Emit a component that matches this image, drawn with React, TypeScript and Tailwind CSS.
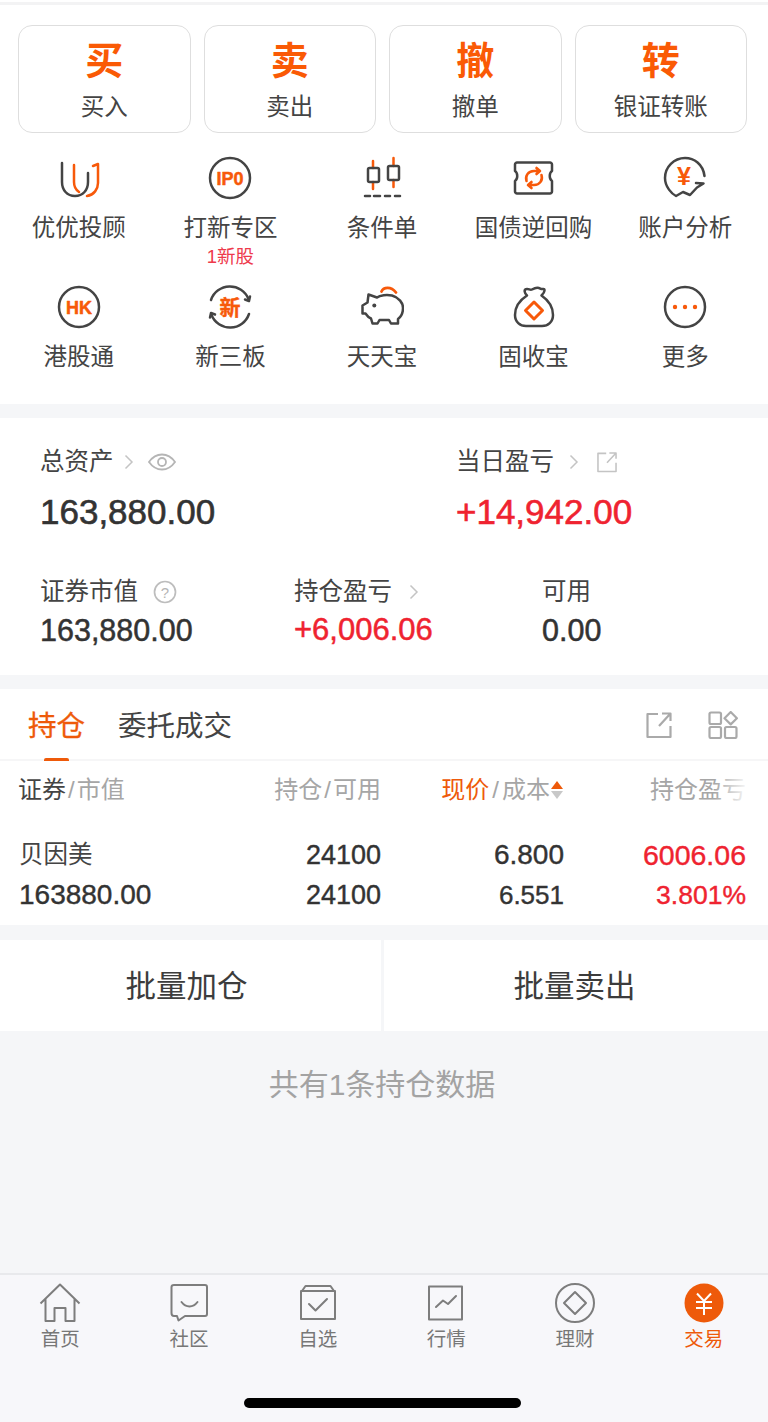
const ORANGE = "#f7590a";
const DARK = "#444444";

function Svg({ children, size = 44, box = 44, className = "" }: { children: React.ReactNode; size?: number; box?: number; className?: string }) {
  return (
    <svg width={size} height={size} viewBox={`0 0 ${box} ${box}`} fill="none" strokeLinecap="round" strokeLinejoin="round" className={className}>
      {children}
    </svg>
  );
}

const labelText = (t: string, size: number, y = 28) => (
  <text x="22" y={y} textAnchor="middle" fill={ORANGE} stroke={ORANGE} strokeWidth="0.5" fontWeight="700" fontSize={size} fontFamily="'Liberation Sans','Noto Sans CJK SC',sans-serif">{t}</text>
);

const icons: Record<string, React.ReactNode> = {
  uu: (
    <Svg>
      <g strokeWidth="2.5">
        <path d="M5 7V26C5 34 10 40 18 40C26 40 31 34 31 26V17" stroke={DARK} />
        <path d="M17 9V26C17 30 19 34 22 36" stroke={ORANGE} />
        <path d="M36 10L41 8V27C41 33 37 39 30 40" stroke={ORANGE} />
      </g>
    </Svg>
  ),
  ipo: (
    <Svg>
      <circle cx="22" cy="22" r="20" stroke={DARK} strokeWidth="2.500" />
      {labelText("IP0", 18, 28.500)}
    </Svg>
  ),
  candle: (
    <Svg>
      <g strokeWidth="2.5">
        <path d="M13 5V12M13 26V33M33.5 2V10M33.5 24V31" stroke={ORANGE} />
        <rect x="8" y="12" width="11" height="14" rx="1.5" stroke={DARK} />
        <rect x="28" y="10" width="11" height="14" rx="1.5" stroke={DARK} />
        <path d="M5 40H10M14 40H20M25 40H30M35 40H40" stroke={DARK} />
      </g>
    </Svg>
  ),
  ticket: (
    <Svg>
      <path d="M5 6.500H38C39 6.500 40 7.500 40 8.500V15C37 17 37 23 40 25V35.500C40 36.500 39 37.500 38 37.500H5C4 37.500 3 36.500 3 35.500V25C6 23 6 17 3 15V8.500C3 7.500 4 6.500 5 6.500Z" stroke={DARK} strokeWidth="2.500" />
      <path d="M14.500 25C13 20 16 15 22 15H27M24.500 12L28 15L24.500 18M29.500 19C31 24 28 29 22 29H17M19.500 32L16 29L19.500 26" stroke={ORANGE} strokeWidth="2.600" />
    </Svg>
  ),
  analysis: (
    <Svg>
      <path d="M41.500 20C40 8 31 2 22 2C11 2 2 11 2 22C2 31 9 38 13 40L20 36L27 39L34 31.500L40.500 27.500L33 27" stroke={DARK} strokeWidth="2.500" />
      <text x="21" y="29" textAnchor="middle" fill={ORANGE} fontWeight="700" fontSize="25" fontFamily="'Liberation Sans',sans-serif">¥</text>
    </Svg>
  ),
  hk: (
    <Svg>
      <circle cx="22" cy="22" r="20" stroke={DARK} strokeWidth="2.500" />
      {labelText("HK", 18, 28.500)}
    </Svg>
  ),
  xin: (
    <Svg>
      <path d="M3 15A20 20 0 0 1 40.500 14M41 29A20 20 0 0 1 3.500 30" stroke={DARK} strokeWidth="2.500" />
      <path d="M37 14.500L41 16L42 11.500M7 29.500L3 28L2 32.500" stroke={DARK} strokeWidth="2.500" />
      <text x="22" y="30" textAnchor="middle" fill={ORANGE} stroke={ORANGE} strokeWidth="0.4" fontWeight="700" fontSize="21" fontFamily="'Noto Sans CJK SC',sans-serif">新</text>
    </Svg>
  ),
  pig: (
    <Svg>
      <path d="M8.500 9.500L17 12.500C20 10 27 9.500 32 10.500C39 12.500 43 18 43 23C43 29 40 32.500 38 34V38.500H31L29 35H19.500L17.500 38.500H12.500L11 33.500C8 32.500 6.500 30 5.500 28.500H2.500V20.500L7.500 17.500Z" stroke={DARK} strokeWidth="2.500" />
      <circle cx="14.300" cy="20.500" r="2" fill={DARK} />
      <path d="M21.500 6.500C23.500 2 31 1 36 7.500" stroke={ORANGE} strokeWidth="2.800" />
    </Svg>
  ),
  bag: (
    <Svg>
      <path d="M15 10.500C12.500 8.500 11.500 4.500 14.500 4C17 3.500 18 5.500 20 4.500C22.500 3 24.500 2 27 3C28.500 3.500 29.500 4.500 31 4C33 3.500 33.500 6.500 29.500 10.500C36 15 41 22 41 30C41 37 36 41 30 41H14C8 41 3 37 3 30C3 22 8 15 15 10.500Z" stroke={DARK} strokeWidth="2.500" />
      <path d="M22 17L30.500 25.500L22 34L13.500 25.500Z" stroke={ORANGE} strokeWidth="3" />
    </Svg>
  ),
  more: (
    <Svg>
      <circle cx="22" cy="22" r="20" stroke={DARK} strokeWidth="2.500" />
      <circle cx="12" cy="22" r="2.200" fill={ORANGE} />
      <circle cx="22" cy="22" r="2.200" fill={ORANGE} />
      <circle cx="32" cy="22" r="2.200" fill={ORANGE} />
    </Svg>
  ),
};

const Chevron = ({ className = "" }: { className?: string }) => (
  <svg width="10" height="16" viewBox="0 0 10 16" fill="none" className={className}>
    <path d="M1.500 1.500L8 8L1.500 14.500" stroke="#c4c4c4" strokeWidth="1.500" />
  </svg>
);

const ShareIcon = ({ size, color, w = 2 }: { size: number; color: string; w?: number }) => (
  <svg width={size} height={size} viewBox="0 0 28 28" fill="none">
    <path d="M13 3H2.500V26H25.500V15M14 15L25.500 2.500M17 2.500H25.500V10" stroke={color} strokeWidth={w} strokeLinejoin="round" />
  </svg>
);

const actions = [["买", "买入"], ["卖", "卖出"], ["撤", "撤单"], ["转", "银证转账"]];
const row1 = [["uu", "优优投顾", ""], ["ipo", "打新专区", "1新股"], ["candle", "条件单", ""], ["ticket", "国债逆回购", ""], ["analysis", "账户分析", ""]];
const row2 = [["hk", "港股通"], ["xin", "新三板"], ["pig", "天天宝"], ["bag", "固收宝"], ["more", "更多"]];

const GRAY = "#7d7d7d";
const tabs: [string, React.ReactNode][] = [
  ["首页", <svg key="h" width="42" height="40" viewBox="0 0 42 40" fill="none" strokeLinejoin="round" stroke={GRAY} strokeWidth="2"><path d="M1.500 20.500L21 1.500L40.500 20.500M6.500 16V38H15.500V25H26.500V38H35.500V16" /></svg>],
  ["社区", <svg key="s" width="40" height="40" viewBox="0 0 40 40" fill="none" strokeLinejoin="round" strokeLinecap="round" stroke={GRAY} strokeWidth="2"><path d="M5 2H36C37 2 38 3 38 4V31C38 32 37 33 36 33H16L9.500 37.500L8 33H5C3.500 33 2.500 31.500 2.500 30V4C2.500 3 3.500 2 5 2Z" /><path d="M12.500 19C17 25 24 25 28.500 19" /></svg>],
  ["自选", <svg key="z" width="40" height="40" viewBox="0 0 40 40" fill="none" strokeLinejoin="round" strokeLinecap="round" stroke={GRAY} strokeWidth="2"><path d="M4 8L7.500 3H32.500L36 8M3 8H37V36H3V8Z" /><path d="M11 21L17.500 27.500L29 16" /></svg>],
  ["行情", <svg key="x" width="40" height="40" viewBox="0 0 40 40" fill="none" strokeLinejoin="round" strokeLinecap="round" stroke={GRAY} strokeWidth="2"><rect x="3" y="3.500" width="33" height="33" /><path d="M10 24L17 17.500L22 21L30 13" /></svg>],
  ["理财", <svg key="l" width="40" height="40" viewBox="0 0 40 40" fill="none" strokeLinejoin="round" stroke={GRAY} strokeWidth="2"><circle cx="20" cy="20" r="19" /><path d="M20 9L31 20L20 31L9 20Z" /></svg>],
  ["交易", <svg key="j" width="40" height="40" viewBox="0 0 40 40" fill="none"><circle cx="20" cy="20" r="19.500" fill="#ee5a0a" /><path d="M13 10.500L20 18L27 10.500M12 19H28M12 25H28M20 18V32" stroke="#fff" strokeWidth="2" /></svg>],
];

export default function App() {
  return (
    <div className="w-[768px] h-[1422px] bg-[#f5f6f8] overflow-hidden flex flex-col text-[#444444] [font-family:'Liberation_Sans','Noto_Sans_CJK_SC',sans-serif]">
      <section className="bg-white h-[404px] flex flex-col">
        <div className="h-[3px] mt-[2px] bg-[#f3f3f4]" />
        <div className="flex gap-[13px] pl-[18px] pr-[21px] pt-[20px]">
          {actions.map(([a, b]) => (
            <div key={a} className="w-[172.500px] h-[108px] rounded-[14px] border-[1.500px] border-[#dedede] flex flex-col items-center">
              <div className="text-[38px] leading-[40px] mt-[15px] font-bold text-[#fa5a05]">{a}</div>
              <div className="text-[23.500px] leading-[30px] mt-[11px]">{b}</div>
            </div>
          ))}
        </div>
        <div className="grid grid-cols-5 pl-[3px] pr-[7px] mt-[23px]">
          {row1.map(([i, t, s]) => (
            <div key={t} className="h-[129px] flex flex-col items-center">
              {icons[i]}
              <div className="text-[23.500px] leading-[30px] mt-[13px] whitespace-nowrap">{t}</div>
              {s && <div className="text-[18.500px] leading-[24px] mt-[2px] text-[#ee3a4c]">{s}</div>}
            </div>
          ))}
          {row2.map(([i, t]) => (
            <div key={t} className="flex flex-col items-center">
              {icons[i]}
              <div className="text-[23.500px] leading-[30px] mt-[13px] whitespace-nowrap">{t}</div>
            </div>
          ))}
        </div>
      </section>

      <section className="bg-white h-[257px] mt-[14px] px-[40px] pt-[29px]">
        <div className="flex">
          <div className="w-[416px]">
            <div className="flex items-center h-[30px] text-[24.500px] leading-[30px]">
              总资产
              <Chevron className="ml-[10px]" />
              <svg width="28" height="20" viewBox="0 0 28 20" fill="none" stroke="#b5b5b5" strokeWidth="1.800" className="ml-[14px]"><path d="M1 10C8 0 20 0 27 10C20 20 8 20 1 10Z" /><circle cx="14" cy="10" r="4" /></svg>
            </div>
            <div className="text-[35px] leading-[40px] mt-[15px] [-webkit-text-stroke:0.6px_#333] text-[#333]">163,880.00</div>
          </div>
          <div>
            <div className="flex items-center h-[30px] text-[24.500px] leading-[30px]">
              当日盈亏
              <Chevron className="ml-[15px]" />
              <span className="ml-[17px] flex"><ShareIcon size={22} color="#c4c4c4" /></span>
            </div>
            <div className="text-[35px] leading-[40px] mt-[15px] [-webkit-text-stroke:0.6px_#ef2330] text-[#ef2330]">+14,942.00</div>
          </div>
        </div>
        <div className="flex mt-[45px]">
          <div className="w-[254px]">
            <div className="flex items-center h-[30px] text-[24.500px] leading-[30px]">
              证券市值
              <svg width="24" height="24" viewBox="0 0 24 24" fill="none" className="ml-[15px]"><circle cx="12" cy="12" r="10.500" stroke="#bdbdbd" strokeWidth="1.700" /><text x="12" y="17.500" textAnchor="middle" fontSize="15" fill="#b5b5b5" fontFamily="'Liberation Sans',sans-serif">?</text></svg>
            </div>
            <div className="text-[30.500px] leading-[36px] mt-[5px] [-webkit-text-stroke:0.5px_#333] text-[#333]">163,880.00</div>
          </div>
          <div className="w-[248px]">
            <div className="flex items-center h-[30px] text-[24.500px] leading-[30px]">
              持仓盈亏
              <Chevron className="ml-[17px]" />
            </div>
            <div className="text-[31px] leading-[36px] mt-[5px] [-webkit-text-stroke:0.5px_#ef2330] text-[#ef2330]">+6,006.06</div>
          </div>
          <div>
            <div className="h-[30px] text-[24.500px] leading-[30px]">可用</div>
            <div className="text-[30.500px] leading-[36px] mt-[5px] [-webkit-text-stroke:0.5px_#333] text-[#333]">0.00</div>
          </div>
        </div>
      </section>

      <section className="bg-white h-[236px] mt-[14px]">
        <div className="h-[72px] border-b-2 border-[#f6f6f7] flex pl-[28px] pr-[30px] pt-[19px]">
          <div className="flex flex-col items-center h-[53px]">
            <div className="text-[28.500px] leading-[36px] text-[#ee5a0a] [-webkit-text-stroke:0.3px_#ee5a0a]">持仓</div>
            <div className="w-[25px] h-[5px] mt-[14px] rounded-t-[2px] bg-[#ee5a0a]" />
          </div>
          <div className="text-[28.500px] leading-[36px] ml-[33px]">委托成交</div>
          <div className="ml-auto flex gap-[35px] pt-[3px] h-[30px]">
            <ShareIcon size={28} color="#aaaaaa" w={2.200} />
            <svg width="30" height="28" viewBox="0 0 30 28" fill="none" stroke="#aaaaaa" strokeWidth="2.200" strokeLinejoin="round">
              <rect x="1.500" y="1.500" width="11.500" height="11.500" rx="1.500" /><rect x="1.500" y="16" width="11.500" height="11" rx="1.500" /><rect x="17" y="16" width="11.500" height="11" rx="1.500" /><path d="M22.700 1L28.900 7.200L22.700 13.400L16.500 7.200Z" />
            </svg>
          </div>
        </div>
        <div className="relative flex h-[58px] items-center pl-[18px] pr-[22px] text-[24px] leading-[30px] text-[#a6a6a6]">
          <div className="w-[191px]"><span className="text-[#444]">证券</span><span className="mx-[2px]">/</span>市值</div>
          <div className="w-[172px] text-right">持仓<span className="mx-[2px]">/</span>可用</div>
          <div className="w-[183px] text-right flex justify-end items-center">
            <span className="text-[#ee5a0a]">现价</span><span className="mx-[3px]">/</span>成本
            <svg width="14" height="20" viewBox="0 0 14 20"><path d="M7 1L13 9H1Z" fill="#ee5a0a" /><path d="M7 19L13 11H1Z" fill="#c8c8c8" /></svg>
          </div>
          <div className="flex-1 text-right whitespace-nowrap">持仓盈亏</div>
          <div className="absolute right-[18px] top-0 h-full w-[36px] bg-gradient-to-r from-transparent to-white" />
        </div>
        <div className="flex pl-[19px] pr-[22px] mt-[16px] text-[27px] leading-[40px] text-[#333] [-webkit-text-stroke:0.4px]">
          <div className="w-[190px] whitespace-nowrap">
            <div className="text-[24.500px] [-webkit-text-stroke:0] text-[#444]">贝因美</div>
            <div className="text-[28px]">163880.00</div>
          </div>
          <div className="w-[172px] text-right"><div>24100</div><div>24100</div></div>
          <div className="w-[183px] text-right"><div className="text-[28px]">6.800</div><div className="text-[26px]">6.551</div></div>
          <div className="flex-1 text-right text-[#ef2330]"><div className="text-[28.500px]">6006.06</div><div className="text-[26.500px]">3.801%</div></div>
        </div>
      </section>

      <section className="flex h-[91px] mt-[15px] gap-[3px] text-[30.500px] text-[#3c3c3c]">
        <div className="w-[381px] bg-white flex items-center justify-center pr-[8px] pt-[3px]">批量加仓</div>
        <div className="flex-1 bg-white flex items-center justify-center pr-[3px] pt-[3px]">批量卖出</div>
      </section>

      <div className="h-[242px] pt-[36px] text-center text-[30px] leading-[36px] text-[#a3a3a3] pr-[4px]">共有1条持仓数据</div>

      <nav className="flex-1 bg-[#f7f7fa] border-t-2 border-[#e8e9ec] flex flex-col">
        <div className="w-[772px] -ml-[4px] grid grid-cols-6 pt-[8px]">
          {tabs.map(([t, ic]) => (
            <div key={t} className="flex flex-col items-center">
              <div className="h-[40px] flex items-center justify-center">{ic}</div>
              <div className={`text-[19.500px] leading-[26px] mt-[3px] ${t === "交易" ? "text-[#ee5a0a]" : "text-[#777777]"}`}>{t}</div>
            </div>
          ))}
        </div>
        <div className="w-[277px] h-[10px] rounded-full bg-black mt-[46px] ml-[244px]" />
      </nav>
    </div>
  );
}
